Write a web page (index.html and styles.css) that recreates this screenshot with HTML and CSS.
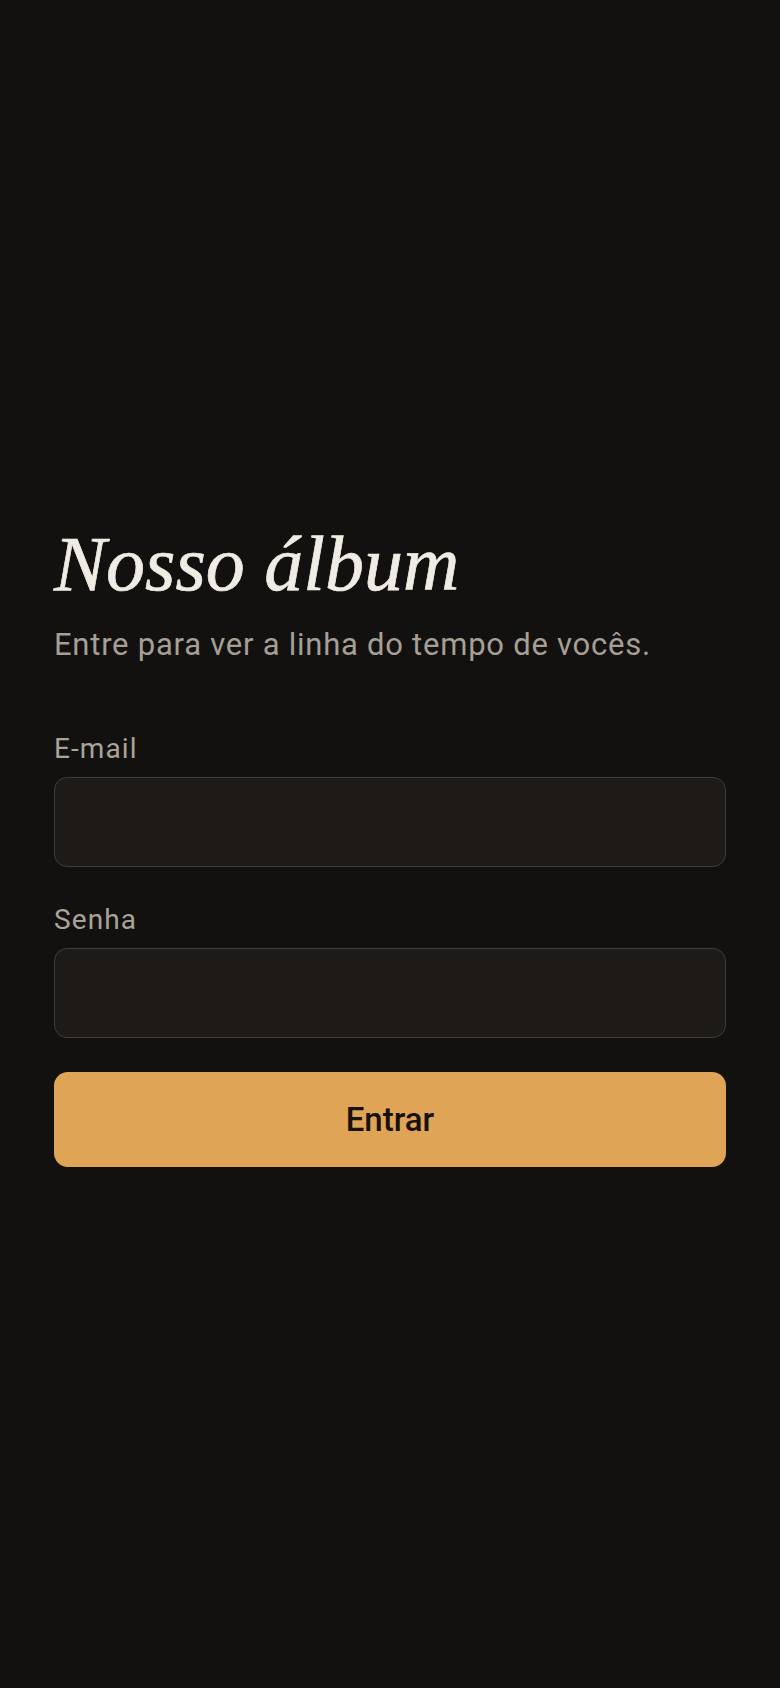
FILE: index.html
```html
<!DOCTYPE html>
<html lang="pt-BR">
    <head>
        <meta charset="utf-8">
        <title>Nosso álbum</title>
        <link rel="stylesheet" href="styles.css">
    </head>
    <body>

    <main class="entrada">
        <h1 class="titulo">Nosso álbum</h1>
        <p class="subtitulo">Entre para ver a linha do tempo de vocês.</p>

        <form class="formulario" name="login">
            <label class="campo">
                <span class="rotulo">E-mail</span>
                <input type="email" name="email" class="caixa">
            </label>

            <label class="campo">
                <span class="rotulo">Senha</span>
                <input type="password" name="senha" class="caixa">
            </label>

            <button type="button" class="botao">Entrar</button>
        </form>
    </main>

    </body>
</html>
```

FILE: styles.css
```css
body {
    margin: 0;
    background: #121110;
    font-family: Roboto, "Liberation Sans", sans-serif;
}

.entrada {
    min-height: 100vh;
    box-sizing: border-box;
    display: flex;
    flex-direction: column;
    justify-content: center;
    padding: 0 54px;
}

.titulo {
    margin: 0;
    font-family: "Liberation Serif", serif;
    font-style: italic;
    font-weight: normal;
    font-size: 78px;
    line-height: 1.1;
    color: #f0ece4;
    -webkit-text-stroke: 0.7px #f0ece4;
}

.subtitulo {
    margin: 18px 0 0;
    font-size: 31px;
    line-height: 1.3;
    color: #a59f95;
    letter-spacing: 0.75px;
}

.formulario {
    margin-top: 67px;
    display: flex;
    flex-direction: column;
    gap: 34px;
}

.campo {
    display: flex;
    flex-direction: column;
    gap: 11px;
}

.campo + .campo {
    margin-top: 2px;
}

.rotulo {
    font-size: 28px;
    line-height: 1.2;
    color: #a9a398;
    letter-spacing: 1.1px;
}

.caixa {
    height: 90px;
    box-sizing: border-box;
    border: 1.5px solid #403c38;
    border-radius: 13px;
    background: #1e1a17;
    color: #f0ece4;
    font-size: 28px;
    padding: 0 22px;
    outline: none;
}

.botao {
    height: 95px;
    border: none;
    border-radius: 14px;
    background: #e0a456;
    color: #16110d;
    font-family: Roboto, "Liberation Sans", sans-serif;
    font-size: 33px;
    font-weight: 500;
}
```
